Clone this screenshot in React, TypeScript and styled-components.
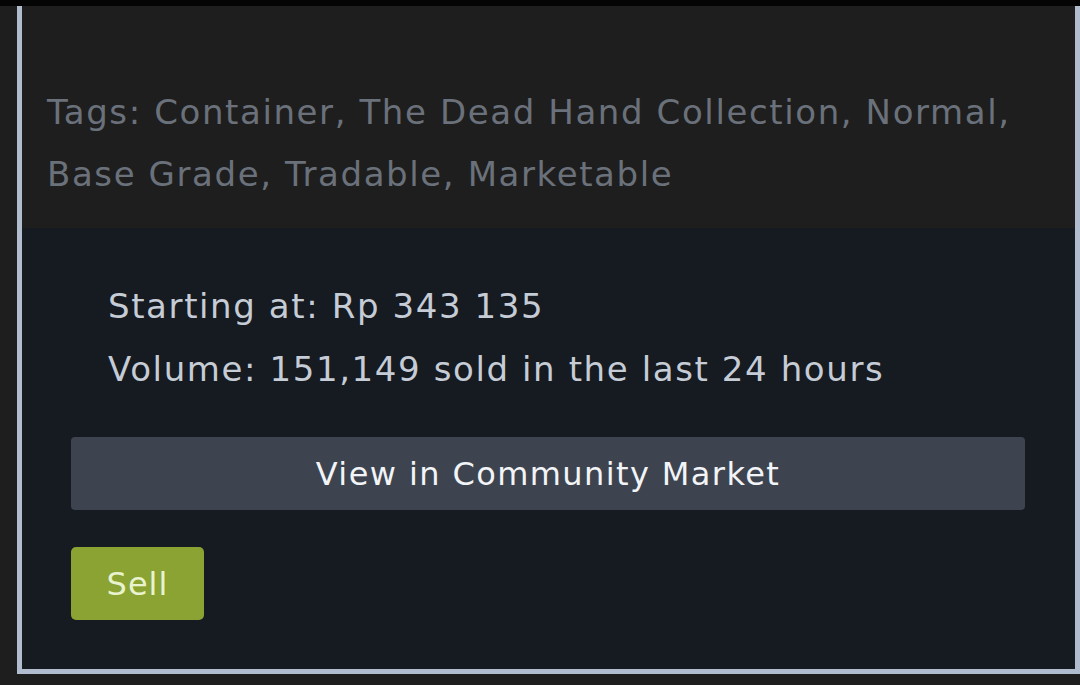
import React from "react";
import styled, { createGlobalStyle } from "styled-components";

const Global = createGlobalStyle`
  html, body { margin: 0; padding: 0; background: #1e1e1e; }
  body { font-family: "DejaVu Sans", "Noto Sans", sans-serif; overflow: hidden; }
`;

const Page = styled.div`
  width: 1080px;
  height: 685px;
  background: #1e1e1e;
  display: flex;
  flex-direction: column;
`;

const TopStrip = styled.div`
  height: 6px;
  background: #040404;
`;

const Panel = styled.div`
  margin-left: 17px;
  width: 1063px;
  height: 668px;
  box-sizing: border-box;
  border: 5px solid #b2bccf;
  border-top: none;
  display: flex;
  flex-direction: column;
`;

const TagsSection = styled.div`
  height: 222px;
  box-sizing: border-box;
  background: #1e1e1e;
  padding: 75px 30px 0 25px;
`;

const Tags = styled.p`
  margin: 0;
  font-size: 34px;
  letter-spacing: 1.6px;
  line-height: 62px;
  color: #6a717b;
`;

const MarketSection = styled.div`
  flex: 1;
  background: #161a21;
  padding: 47px 49px 0 49px;
  display: flex;
  flex-direction: column;
  align-items: flex-start;
`;

const Info = styled.div`
  padding-left: 37px;
  font-size: 34px;
  letter-spacing: 1.6px;
  line-height: 63px;
  color: #c5ccd5;
`;

const Line = styled.div``;

const WideButton = styled.button`
  margin-top: 36px;
  width: 954px;
  height: 73px;
  border: none;
  border-radius: 4px;
  background: #3d4450;
  color: #f2f4f7;
  font-family: inherit;
  font-size: 32px;
  letter-spacing: 1.4px;
`;

const SellButton = styled.button`
  margin-top: 37px;
  width: 133px;
  height: 73px;
  border: none;
  border-radius: 5px;
  background: #8aa333;
  color: #e9f3cf;
  font-family: inherit;
  font-size: 32px;
  letter-spacing: 1px;
`;

export default function App() {
  return (
    <Page>
      <Global />
      <TopStrip />
      <Panel>
        <TagsSection>
          <Tags>
            Tags: Container, The Dead Hand Collection, Normal, Base Grade, Tradable, Marketable
          </Tags>
        </TagsSection>
        <MarketSection>
          <Info>
            <Line>Starting at: Rp 343 135</Line>
            <Line>Volume: 151,149 sold in the last 24 hours</Line>
          </Info>
          <WideButton>View in Community Market</WideButton>
          <SellButton>Sell</SellButton>
        </MarketSection>
      </Panel>
    </Page>
  );
}
